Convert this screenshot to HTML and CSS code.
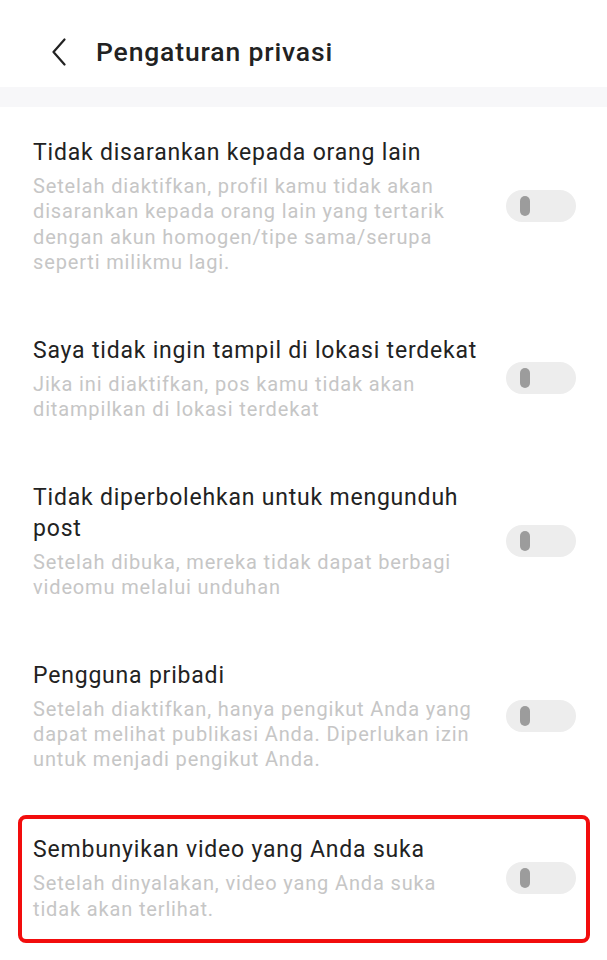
FILE: index.html
```html
<!DOCTYPE html>
<html lang="id">
<head>
<meta charset="utf-8">
<title>Pengaturan privasi</title>
<link rel="stylesheet" href="styles.css">
</head>
<body>
<div class="page">
  <header class="topbar">
    <span class="back" aria-label="Kembali">
      <svg width="16" height="28" viewBox="0 0 16 28"><path d="M13.5 1.5 L2.5 14 L13.5 26.5" fill="none" stroke="#222" stroke-width="2.2" stroke-linecap="round" stroke-linejoin="round"/></svg>
    </span>
    <h1 class="title">Pengaturan privasi</h1>
  </header>
  <div class="band"></div>
  <main class="list">
    <div class="row">
      <div class="text">
        <div class="row-title">Tidak disarankan kepada orang lain</div>
        <div class="row-desc">Setelah diaktifkan, profil kamu tidak akan disarankan kepada orang lain yang tertarik dengan akun homogen/tipe sama/serupa seperti milikmu lagi.</div>
      </div>
      <span class="toggle"><span class="knob"></span></span>
    </div>
    <div class="row">
      <div class="text">
        <div class="row-title">Saya tidak ingin tampil di lokasi terdekat</div>
        <div class="row-desc">Jika ini diaktifkan, pos kamu tidak akan ditampilkan di lokasi terdekat</div>
      </div>
      <span class="toggle"><span class="knob"></span></span>
    </div>
    <div class="row">
      <div class="text">
        <div class="row-title">Tidak diperbolehkan untuk mengunduh post</div>
        <div class="row-desc">Setelah dibuka, mereka tidak dapat berbagi videomu melalui unduhan</div>
      </div>
      <span class="toggle"><span class="knob"></span></span>
    </div>
    <div class="row">
      <div class="text">
        <div class="row-title">Pengguna pribadi</div>
        <div class="row-desc">Setelah diaktifkan, hanya pengikut Anda yang dapat melihat publikasi Anda. Diperlukan izin untuk menjadi pengikut Anda.</div>
      </div>
      <span class="toggle"><span class="knob"></span></span>
    </div>
    <div class="row row-highlight">
      <div class="text">
        <div class="row-title">Sembunyikan video yang Anda suka</div>
        <div class="row-desc">Setelah dinyalakan, video yang Anda suka tidak akan terlihat.</div>
      </div>
      <span class="toggle"><span class="knob"></span></span>
    </div>
  </main>
</div>
</body>
</html>
```

FILE: styles.css
```css
* { box-sizing: border-box; }
html, body { margin: 0; padding: 0; background: #fff; }
body {
  font-family: Roboto, "Noto Sans", "Liberation Sans", sans-serif;
  color: #222;
  -webkit-font-smoothing: antialiased;
}
.page { width: 607px; }
.topbar {
  height: 87px;
  display: flex;
  align-items: center;
  padding-left: 51px;
  padding-top: 16px;
}
.back { display: flex; width: 16px; height: 28px; margin-right: 29px; }
.title {
  margin: 0;
  font-size: 26.5px;
  font-weight: 500;
  color: #222;
  letter-spacing: 0.85px;
}
.band { height: 20px; background: #f7f7f9; }
.list { display: flex; flex-direction: column; }
.row {
  display: flex;
  align-items: center;
  padding: 30px 31px 29.5px 33px;
}
.text { flex: 1; min-width: 0; margin-right: 26px; }
.row-title {
  font-size: 23px;
  line-height: 31px;
  letter-spacing: 0.8px;
  color: #222;
}
.row-desc {
  margin-top: 6px;
  font-size: 20px;
  line-height: 25.3px;
  letter-spacing: 0.85px;
  color: #c6c6c6;
}
.toggle {
  flex: none;
  width: 70px;
  height: 32px;
  border-radius: 16px;
  background: #ededed;
  display: flex;
  align-items: center;
  padding-left: 14px;
}
.knob {
  width: 10px;
  height: 20px;
  border-radius: 5px;
  background: #9c9c9c;
}
.row-highlight {
  margin: 13px 17px 0 18px;
  border: 4px solid #f20d0d;
  border-radius: 8px;
  padding: 15px 10px 17px 11px;
}
```
